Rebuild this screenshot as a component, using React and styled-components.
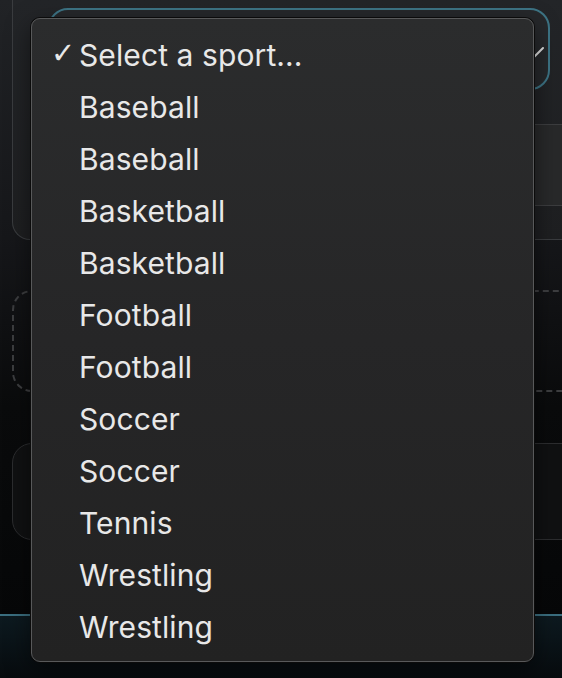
import React from 'react'
import styled, { createGlobalStyle } from 'styled-components'

const GlobalStyle = createGlobalStyle`
  html, body {
    margin: 0;
    padding: 0;
    background: #08090a;
  }
  body {
    font-family: Inter, "Noto Sans", "Liberation Sans", sans-serif;
  }
`;

const sports = [
    'Baseball', 'Baseball', 'Basketball', 'Basketball', 'Football', 'Football',
    'Soccer', 'Soccer', 'Tennis', 'Wrestling', 'Wrestling',
];

function App() {
    return (
        <Page>
            <GlobalStyle />
            <Card>
                <SelectBox>
                    <Chevron viewBox="0 0 20 12" fill="none">
                        <path d="M2 2 L10 10 L18 2" stroke="#e0e0e0" strokeWidth="2" strokeLinecap="round" />
                    </Chevron>
                </SelectBox>
                <Notes />
            </Card>
            <DropZone />
            <Preview />
            <Footer />

            <Menu>
                <Option selected>Select a sport...</Option>
                {sports.map((s, i) => (
                    <Option key={i}>{s}</Option>
                ))}
            </Menu>
        </Page>
    )
}

export default App;

const Page = styled.div`
    position: relative;
    width: 562px;
    height: 678px;
    overflow: hidden;
    background: linear-gradient(180deg, #212326 0%, #16171a 35%, #0a0b0c 60%, #050607 100%);
    display: flex;
    flex-direction: column;
`;

const Card = styled.div`
    margin-left: 12px;
    height: 240px;
    box-sizing: border-box;
    border-left: 1px solid #3a3c3f;
    border-bottom: 1px solid #3a3c3f;
    border-bottom-left-radius: 18px;
    background: linear-gradient(180deg, #232528 0%, #1e1f21 100%);
    padding: 8px 0 0 35px;
    display: flex;
    flex-direction: column;
    gap: 34px;
`;

const SelectBox = styled.div`
    width: 502px;
    height: 82px;
    box-sizing: border-box;
    border: 2px solid #3d7485;
    border-radius: 20px;
    background: #26282b;
    position: relative;
`;

const Chevron = styled.svg`
    position: absolute;
    right: 3px;
    top: 36px;
    width: 20px;
    height: 12px;
`;

const Notes = styled.div`
    height: 82px;
    margin-right: -1px;
    box-sizing: border-box;
    border-top: 1px solid #3c3d3f;
    border-bottom: 1px solid #3c3d3f;
    background: #28292a;
`;

const DropZone = styled.div`
    margin: 50px -20px 0 12px;
    height: 102px;
    box-sizing: border-box;
    border: 2px dashed #3d3e40;
    border-radius: 20px;
`;

const Preview = styled.div`
    margin: 51px -20px 0 12px;
    height: 97px;
    box-sizing: border-box;
    border: 1px solid #2c2d2f;
    border-radius: 20px;
    background: #101112;
`;

const Footer = styled.div`
    margin-top: 74px;
    flex: 1;
    border-top: 2px solid #3b6f80;
    background: linear-gradient(180deg, #0d1a20 0%, #070b0e 100%);
`;

const Menu = styled.div`
    position: absolute;
    left: 31px;
    top: 18px;
    width: 503px;
    height: 644px;
    box-sizing: border-box;
    padding: 10px 0 0;
    border: 1px solid #58595a;
    border-radius: 9px;
    background: linear-gradient(180deg, #2b2c2d 0%, #262627 50%, #222222 100%);
    box-shadow: 0 0 0 1px #0b0b0b, 0 8px 24px rgba(0, 0, 0, 0.5);
`;

const Option = styled.div`
    height: 52px;
    display: flex;
    align-items: center;
    padding-left: 47px;
    position: relative;
    color: #e8e8e8;
    font-size: 30px;
    letter-spacing: 0.1px;

    &::before {
        content: ${p => (p.selected ? '"✓"' : 'none')};
        position: absolute;
        left: 19px;
        top: 7px;
        font-size: 29px;
        font-family: "DejaVu Sans", sans-serif;
        color: #e8e8e8;
    }
`;
